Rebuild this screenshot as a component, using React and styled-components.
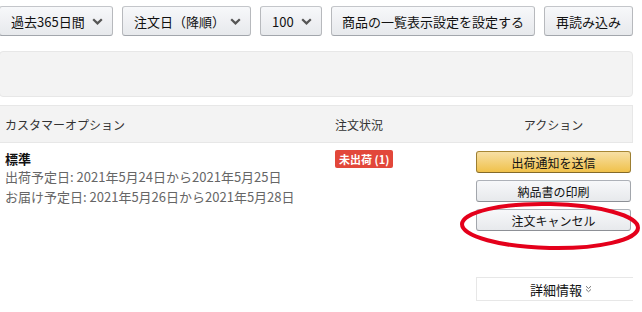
import React from "react";
import styled, { createGlobalStyle } from "styled-components";

const GlobalStyle = createGlobalStyle`
  html, body {
    margin: 0;
    padding: 0;
    background: #fff;
  }
  body {
    font-family: "Noto Sans CJK JP", "Liberation Sans", sans-serif;
    color: #111;
    overflow: hidden;
  }
`;

function Chevron() {
  return (
    <svg width="11" height="7" viewBox="0 0 11 7">
      <polyline
        points="1.2,1.2 5.5,5.4 9.8,1.2"
        fill="none"
        stroke="#555"
        strokeWidth="2.2"
      />
    </svg>
  );
}

function DoubleChevron() {
  return (
    <svg width="7" height="8" viewBox="0 0 7 8">
      <polyline points="1,1.2 3.5,3.5 6,1.2" fill="none" stroke="#777" strokeWidth="1" />
      <polyline points="1,4.4 3.5,6.7 6,4.4" fill="none" stroke="#777" strokeWidth="1" />
    </svg>
  );
}

function App() {
  return (
    <>
      <GlobalStyle />
      <Page>
        <Toolbar>
          <ToolButton $w={114} $dropdown>
            過去365日間
            <Chevron />
          </ToolButton>
          <ToolButton $w={129} $dropdown>
            注文日（降順）
            <Chevron />
          </ToolButton>
          <ToolButton $w={62} $dropdown>
            100
            <Chevron />
          </ToolButton>
          <ToolButton $w={204}>商品の一覧表示設定を設定する</ToolButton>
          <ToolButton $w={89}>再読み込み</ToolButton>
        </Toolbar>

        <FilterPanel />

        <Table>
          <HeaderRow>
            <HeadCell>カスタマーオプション</HeadCell>
            <HeadCell>注文状況</HeadCell>
            <HeadCell $center>アクション</HeadCell>
          </HeaderRow>
          <BodyRow>
            <Cell>
              <Strong>標準</Strong>
              <Muted>出荷予定日: 2021年5月24日から2021年5月25日</Muted>
              <Muted>お届け予定日: 2021年5月26日から2021年5月28日</Muted>
            </Cell>
            <Cell>
              <Badge>未出荷 (1)</Badge>
            </Cell>
            <ActionCell>
              <ActionButton $primary>出荷通知を送信</ActionButton>
              <ActionButton>納品書の印刷</ActionButton>
              <ActionButton>注文キャンセル</ActionButton>
              <Circle viewBox="0 0 186 52" preserveAspectRatio="none">
                <ellipse
                  cx="92"
                  cy="26"
                  rx="88"
                  ry="22"
                  fill="none"
                  stroke="#e4001b"
                  strokeWidth="4"
                  transform="rotate(1.2 92 26)"
                />
              </Circle>
              <DetailsBox>
                詳細情報
                <DoubleChevron />
              </DetailsBox>
            </ActionCell>
          </BodyRow>
        </Table>
      </Page>
    </>
  );
}

export default App;

const Page = styled.div`
  margin: 0 9px 0 -1px;
  padding-top: 6px;
`;

const Toolbar = styled.div`
  display: flex;
  gap: 9px;
  align-items: center;
`;

const ToolButton = styled.button`
  flex: none;
  width: ${(p) => p.$w}px;
  height: 30px;
  box-sizing: border-box;
  display: inline-flex;
  align-items: center;
  justify-content: ${(p) => (p.$dropdown ? "space-between" : "center")};
  padding: ${(p) => (p.$dropdown ? "0 9px 0 11px" : "0")};
  font-family: inherit;
  font-size: 13px;
  color: #111;
  background: linear-gradient(#f7f8fa, #e7e9ec);
  border: 1px solid #adb1b8;
  border-color: #c4c6ca #b7b9bd #a2a6ac;
  border-radius: 3px;
  white-space: nowrap;
  cursor: pointer;
`;

const FilterPanel = styled.div`
  margin-top: 15px;
  height: 46px;
  box-sizing: border-box;
  background: #f3f3f3;
  border: 1px solid #e7e7e7;
  border-radius: 4px;
`;

const Table = styled.div`
  margin-top: 8px;
`;

const Columns = styled.div`
  display: grid;
  grid-template-columns: 336px 140px 1fr;
`;

const HeaderRow = styled(Columns)`
  height: 38px;
  box-sizing: border-box;
  align-items: center;
  background: #f3f3f3;
  border: 1px solid #e7e7e7;
  border-left: none;
`;

const HeadCell = styled.div`
  font-size: 12px;
  color: #333;
  padding-left: ${(p) => (p.$center ? "0" : "6px")};
  text-align: ${(p) => (p.$center ? "center" : "left")};

  &:nth-child(2) {
    padding-left: 0;
  }
`;

const BodyRow = styled(Columns)`
  padding-top: 7px;
`;

const Cell = styled.div`
  padding-left: 6px;
  display: flex;
  flex-direction: column;
  align-items: flex-start;

  &:nth-child(2) {
    padding-left: 0;
  }
`;

const Strong = styled.div`
  font-size: 13px;
  font-weight: 700;
  line-height: 17px;
  color: #111;
`;

const Muted = styled.div`
  font-size: 13px;
  line-height: 19.5px;
  color: #666;
`;

const Badge = styled.span`
  display: inline-block;
  height: 18px;
  line-height: 18px;
  padding: 0 4px;
  background: #e2473a;
  color: #fff;
  font-size: 11px;
  font-weight: 700;
  border-radius: 2px;
`;

const ActionCell = styled.div`
  position: relative;
  display: flex;
  flex-direction: column;
  align-items: flex-end;
  gap: 7px;
  padding-top: 1px;
  padding-right: 2px;
`;

const ActionButton = styled.button`
  width: 155px;
  height: 22px;
  padding: 0;
  font-family: inherit;
  font-size: 12px;
  color: #111;
  border-radius: 3px;
  border: 1px solid;
  background: ${(p) =>
    p.$primary
      ? "linear-gradient(#f7dfa5, #f0c14b)"
      : "linear-gradient(#f7f8fa, #e7e9ec)"};
  border-color: ${(p) =>
    p.$primary ? "#a88734 #9c7e31 #846a29" : "#adb1b8 #a2a6ac #8d9096"};
  cursor: pointer;
`;

const Circle = styled.svg`
  position: absolute;
  left: -17px;
  top: 50px;
  width: 186px;
  height: 52px;
  pointer-events: none;
  overflow: visible;
`;

const DetailsBox = styled.div`
  margin-top: 39px;
  width: 157px;
  height: 24px;
  box-sizing: border-box;
  margin-right: -2px;
  border: 1px solid #e7e7e7;
  border-right: none;
  display: flex;
  align-items: center;
  justify-content: center;
  gap: 3px;
  padding-left: 12px;
  font-size: 13px;
  color: #111;
`;
